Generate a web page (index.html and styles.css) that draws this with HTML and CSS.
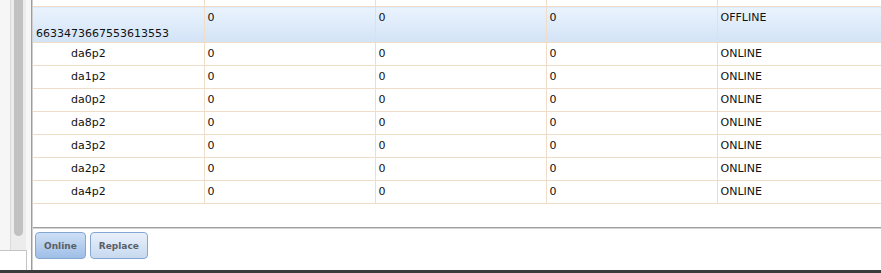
FILE: index.html
```html
<!DOCTYPE html>
<html lang="en">
  <head>
    <meta charset="UTF-8" />
    <meta name="viewport" content="width=device-width, initial-scale=1.0" />
    <title>Servers</title>
    <link rel="stylesheet" href="styles.css">
  </head>
  <body>
    <div class="window">
      <div class="side">
        <div class="side-list">
          <div class="track"><div class="thumb"></div></div>
        </div>
        <div class="side-foot"></div>
      </div>
      <div class="panel">
        <div class="grid">
          <table id="servers">
            <colgroup>
              <col class="col-name" />
              <col class="col-num" />
              <col class="col-num" />
              <col class="col-num" />
              <col />
            </colgroup>
            <tr class="clipped">
              <td></td><td></td><td></td><td></td><td></td>
            </tr>
            <tr class="selected">
              <td><span class="indent"></span> 6633473667553613553</td>
              <td>0</td>
              <td>0</td>
              <td>0</td>
              <td>OFFLINE</td>
            </tr>
          </table>
        </div>
        <div class="toolbar">
          <button class="btn active">Online</button>
          <button class="btn">Replace</button>
        </div>
      </div>
    </div>
    <div class="statusbar"></div>
    <script>
      const table = document.getElementById("servers");
      const nodes = ["da6p2", "da1p2", "da0p2", "da8p2", "da3p2", "da2p2", "da4p2"];

      nodes.forEach((name) => {
        const tr = document.createElement("tr");
        tr.innerHTML =
          '<td><span class="indent"></span>' + name + "</td>" +
          "<td>0</td><td>0</td><td>0</td><td>ONLINE</td>";
        table.appendChild(tr);
      });
    </script>
  </body>
</html>
```

FILE: styles.css
```css
html,
body {
  margin: 0;
  padding: 0;
  background: #fff;
  overflow: hidden;
}
body {
  font-family: "DejaVu Sans", Verdana, sans-serif;
  font-size: 11px;
  color: #111;
}
.window {
  display: flex;
  height: 270px;
}
.side {
  width: 31px;
  flex-shrink: 0;
  display: flex;
  flex-direction: column;
  background: #fff;
}
.side-list {
  height: 250px;
  display: flex;
  justify-content: flex-end;
  padding-right: 5px;
  background: #f6f6f6;
}
.track {
  width: 15px;
  background: #ececec;
  border-left: 1px solid #dadada;
  display: flex;
  justify-content: center;
}
.thumb {
  width: 9px;
  height: 236px;
  background: #c1c1c1;
  border-radius: 0 0 5px 5px;
}
.side-foot {
  flex: 1;
  width: 26px;
  border-top: 1px solid #c4c4c4;
  border-right: 1px solid #c4c4c4;
}
.panel {
  flex: 1;
  min-width: 0;
  display: flex;
  flex-direction: column;
  border-left: 1px solid #9c9c9c;
  box-shadow: inset 1px 0 #cfcfcf;
  padding-left: 1px;
}
.grid {
  flex: 1;
  overflow: hidden;
  background: #fff;
}
table {
  border-collapse: collapse;
  table-layout: fixed;
  width: 100%;
}
col.col-name,
col.col-num {
  width: 171px;
}
td {
  padding: 3px;
  line-height: 16px;
  border-bottom: 1px solid #efdcc9;
  border-left: 1px solid #efdcc9;
  vertical-align: top;
  overflow: hidden;
}
td:first-child {
  border-left: none;
}
tr.clipped td {
  height: 6px;
  padding: 0;
}
tr.selected td {
  padding-bottom: 0;
  background: linear-gradient(#eaf3fd, #d2e3f6);
}
.indent {
  display: inline-block;
  width: 35px;
}
.toolbar {
  height: 38px;
  border-top: 1px solid #9f9f9f;
  box-shadow: inset 0 1px #d4d4d4;
  padding: 4px 0 0 2px;
  display: flex;
  align-items: flex-start;
  gap: 4px;
}
.btn {
  height: 27px;
  padding: 0 8px;
  border: 1px solid #86a6d2;
  border-radius: 4px;
  background: linear-gradient(#e9f0fa, #c7d9f0);
  color: #5a5e66;
  font-family: "DejaVu Sans", Verdana, sans-serif;
  font-size: 9px;
  font-weight: bold;
}
.btn.active {
  background: linear-gradient(#cddff5, #9fbee7);
}
.statusbar {
  height: 3px;
  background: #3b3b3b;
}
```
